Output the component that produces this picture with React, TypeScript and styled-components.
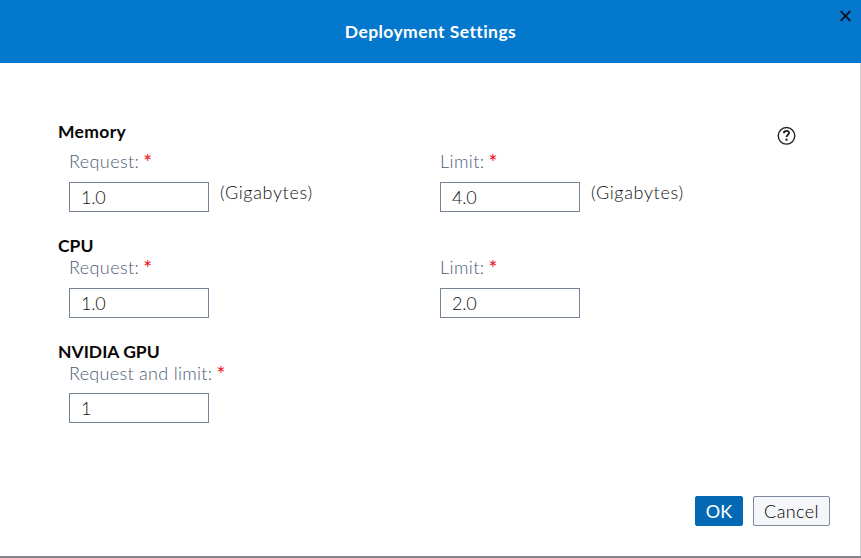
import React from 'react';
import styled, { createGlobalStyle } from 'styled-components';

const GlobalStyle = createGlobalStyle`
  * { box-sizing: border-box; }
  body { margin: 0; background: #fff; overflow: hidden; }
`;

const Dialog = styled.div`
  position: relative;
  display: flex;
  flex-direction: column;
  width: 861px;
  height: 558px;
  background: #fff;
  border-bottom: 2px solid #85878a;
  font-family: Lato, 'Open Sans', sans-serif;
  font-size: 18px;
  font-weight: 300;
  line-height: 20px;
  color: #111;
`;

const Header = styled.header`
  display: flex;
  align-items: center;
  justify-content: center;
  flex: none;
  height: 63px;
  background: #0378cd;
  color: #fff;
`;

const Title = styled.h1`
  margin: 0;
  font-size: 17.5px;
  font-weight: 700;
  line-height: 22px;
  letter-spacing: 0.42px;
`;

const CloseButton = styled.button`
  position: absolute;
  top: 10px;
  right: 10px;
  width: 11px;
  height: 12px;
  padding: 0;
  border: 0;
  background: none;
  svg { display: block; }
`;

const Body = styled.main`
  position: relative;
  flex: 1;
  padding: 58px 0 0 58px;
  border-right: 1px solid #cfd1d4;
`;

const Section = styled.section<{ $height: number }>`
  height: ${(p) => p.$height}px;
`;

const Heading = styled.h2<{ $gap?: number; $spacing?: number }>`
  margin: 0 0 ${(p) => p.$gap ?? 0}px;
  font-size: 17.5px;
  font-weight: 700;
  line-height: 22px;
  letter-spacing: ${(p) => p.$spacing ?? 0}px;
  color: #080808;
`;

const Fields = styled.div`
  display: grid;
  grid-template-columns: 371px 371px;
  padding-left: 11px;
`;

const Label = styled.label<{ $gap?: number; $spacing?: number }>`
  display: flex;
  gap: 4px;
  height: 22px;
  margin-bottom: ${(p) => p.$gap ?? 9}px;
  letter-spacing: ${(p) => p.$spacing ?? 0.4}px;
  color: #4c5b75;
  white-space: nowrap;
`;

const Required = styled.span`
  color: #f0101a;
  font-size: 21px;
  font-weight: 400;
  line-height: 21px;
  letter-spacing: 0;
`;

const InputRow = styled.div`
  display: flex;
  gap: 11px;
`;

const Input = styled.input`
  width: 140px;
  height: 30px;
  padding: 0 10px 1px 11px;
  border: 1px solid #768296;
  border-radius: 0;
  background: #fff;
  font: inherit;
  color: #111;
  letter-spacing: -0.2px;
  outline: 0;
`;

const Unit = styled.span`
  letter-spacing: 0.66px;
`;

const HelpIcon = styled.svg`
  position: absolute;
  left: 777px;
  top: 63px;
`;

const Footer = styled.footer`
  display: flex;
  justify-content: flex-end;
  gap: 10px;
  flex: none;
  height: 60px;
  padding-right: 30px;
  border-right: 1px solid #cfd1d4;
`;

const Button = styled.button<{ $primary?: boolean }>`
  width: ${(p) => (p.$primary ? 48 : 77)}px;
  height: 30px;
  padding: 0;
  border: 1px solid ${(p) => (p.$primary ? '#0469b3' : '#7d899c')};
  border-radius: 2px;
  background: ${(p) => (p.$primary ? '#0469b3' : '#f4f6f9')};
  color: ${(p) => (p.$primary ? '#fff' : '#000')};
  font: inherit;
  font-weight: ${(p) => (p.$primary ? 400 : 300)};
  letter-spacing: ${(p) => (p.$primary ? 0 : 0.4)}px;
`;

type FieldProps = { label: string; value: string; unit?: string; gap?: number; spacing?: number };

function Field({ label, value, unit, gap, spacing }: FieldProps) {
  return (
    <div>
      <Label $gap={gap} $spacing={spacing}>
        {label}
        <Required>*</Required>
      </Label>
      <InputRow>
        <Input defaultValue={value} />
        {unit && <Unit>{unit}</Unit>}
      </InputRow>
    </div>
  );
}

export default function App() {
  return (
    <>
      <GlobalStyle />
      <Dialog role="dialog">
        <Header>
          <Title>Deployment Settings</Title>
          <CloseButton aria-label="Close">
            <svg width="11" height="12" viewBox="0 0 11 12" fill="none" stroke="#0b1118" strokeWidth="1.7">
              <path d="M0.7 1.2 10.3 10.8M10.3 1.2 0.7 10.8" />
            </svg>
          </CloseButton>
        </Header>
        <Body>
          <HelpIcon width="19" height="19" viewBox="0 0 19 19" fill="none" stroke="#222">
            <circle cx="9.5" cy="9.8" r="8.3" strokeWidth="1.4" />
            <path d="M6.9 7.3C7 5.6 8.1 4.9 9.5 4.9c1.5 0 2.5.8 2.5 2.1 0 1.9-2.5 1.9-2.5 4.1" strokeWidth="1.9" />
            <path d="M9.5 12.6v2.1" strokeWidth="2.1" />
          </HelpIcon>
          <Section $height={114}>
            <Heading $gap={8} $spacing={0.35}>Memory</Heading>
            <Fields>
              <Field label="Request:" value="1.0" unit="(Gigabytes)" />
              <Field label="Limit:" value="4.0" unit="(Gigabytes)" />
            </Fields>
          </Section>
          <Section $height={106}>
            <Heading>CPU</Heading>
            <Fields>
              <Field label="Request:" value="1.0" />
              <Field label="Limit:" value="2.0" />
            </Fields>
          </Section>
          <Section $height={100}>
            <Heading>NVIDIA GPU</Heading>
            <Fields>
              <Field label="Request and limit:" value="1" gap={8} spacing={0.3} />
            </Fields>
          </Section>
        </Body>
        <Footer>
          <Button $primary>OK</Button>
          <Button>Cancel</Button>
        </Footer>
      </Dialog>
    </>
  );
}
